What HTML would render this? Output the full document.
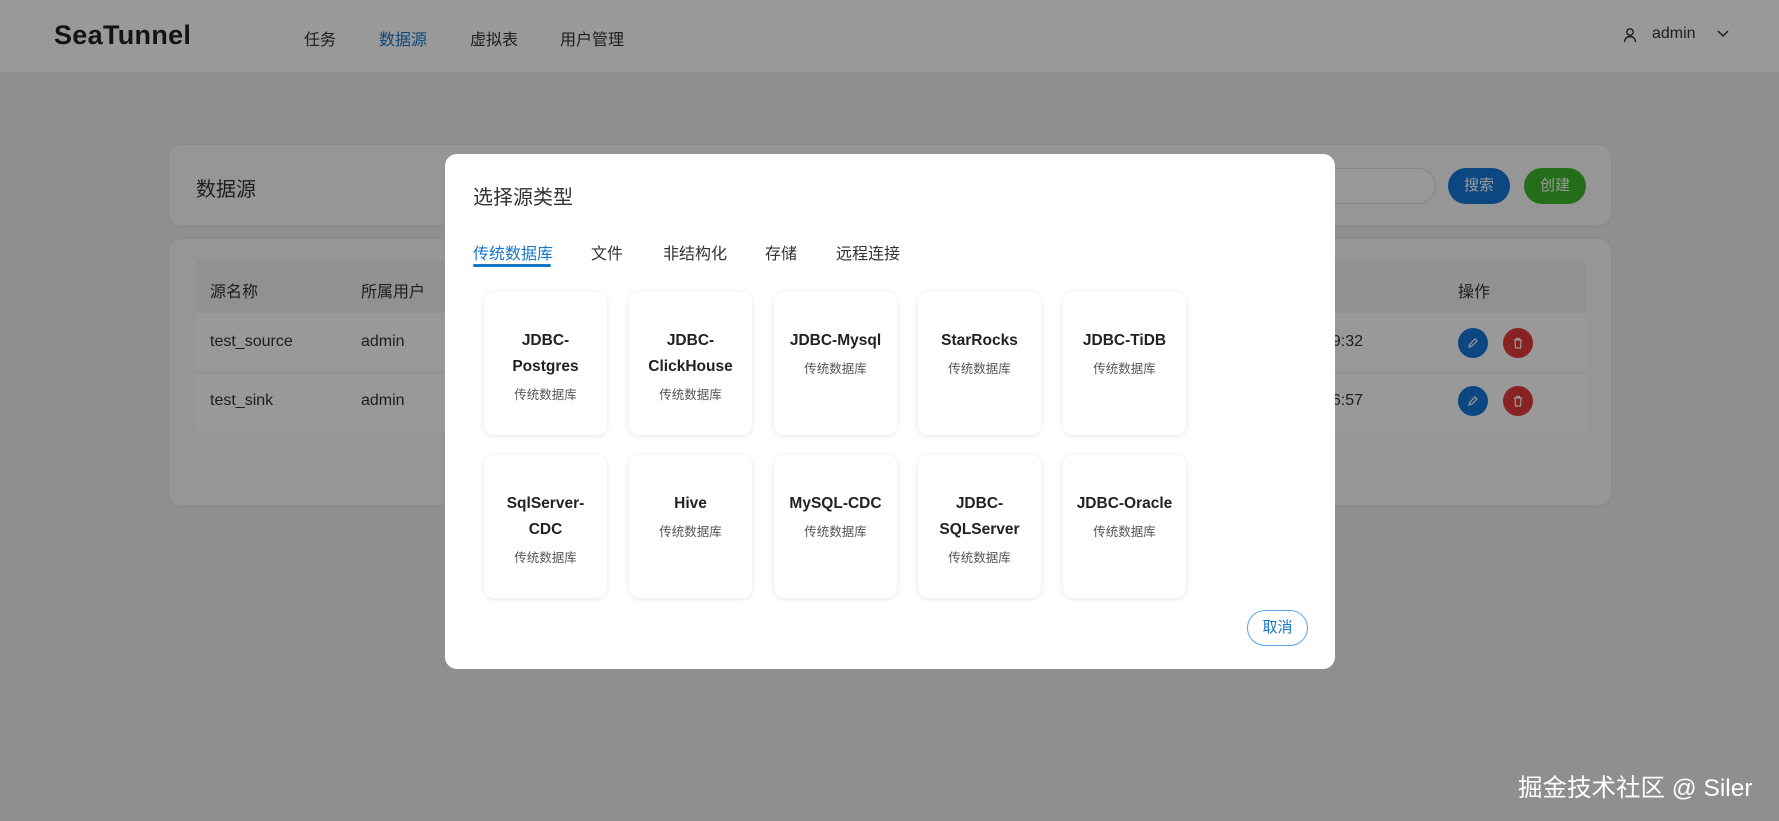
<!DOCTYPE html>
<html><head><meta charset="utf-8"><style>
*{box-sizing:border-box;margin:0;padding:0}
body{width:1779px;height:821px;overflow:hidden;background:#eeeeee;font-family:"Liberation Sans","Noto Sans CJK SC",sans-serif;position:relative;color:#333}
.abs{position:absolute}
.hdr{left:0;top:0;width:1779px;height:73px;background:#fff;border-bottom:1px solid #e6e6e6}
.logo{left:54px;top:20px;font-size:27px;font-weight:bold;color:#222;letter-spacing:0.3px}
.nav{top:26px;font-size:16px;color:#333}
.panel{background:#fafafa;border-radius:12px;box-shadow:0 1px 4px rgba(0,0,0,.06)}
.th{font-size:16px;color:#333}
.circ{width:30px;height:30px;border-radius:50%;display:flex;align-items:center;justify-content:center}
.mask{left:0;top:0;width:1779px;height:821px;background:rgba(0,0,0,.4)}
.modal{left:445px;top:154px;width:890px;height:515px;background:#fff;border-radius:12px}
.card{width:123px;height:143px;border-radius:10px;background:#fff;box-shadow:0 1px 6px rgba(0,0,0,.10);text-align:center;padding-top:36px}
.card b{display:block;font-size:15.5px;line-height:26px;color:#222}
.card span{display:block;font-size:12.5px;color:#555;margin-top:4px}
.tab{top:240px;font-size:16px;color:#333}
</style></head><body>
<div class="abs hdr"></div>
<div class="abs logo">SeaTunnel</div>
<div class="abs nav" style="left:304px">任务</div>
<div class="abs nav" style="left:379px;color:#1677c8">数据源</div>
<div class="abs nav" style="left:470px">虚拟表</div>
<div class="abs nav" style="left:560px">用户管理</div>
<svg class="abs" style="left:1622px;top:27px" width="16" height="16" viewBox="0 0 16 16" fill="none" stroke="#333" stroke-width="1.4"><circle cx="8" cy="5" r="3.2"/><path d="M2.5 15c0-3.3 2.4-5.5 5.5-5.5s5.5 2.2 5.5 5.5"/></svg>
<div class="abs nav" style="left:1652px;top:25px">admin</div>
<svg class="abs" style="left:1716px;top:29px" width="14" height="10" viewBox="0 0 14 10" fill="none" stroke="#333" stroke-width="1.5"><path d="M2 2l5 5 5-5"/></svg>

<div class="abs panel" style="left:169px;top:145px;width:1442px;height:80px"></div>
<div class="abs" style="left:196px;top:173px;font-size:20px;color:#333">数据源</div>
<div class="abs" style="left:1300px;top:168px;width:136px;height:36px;border:1px solid #ddd;border-radius:18px;background:#fff"></div>
<div class="abs" style="left:1448px;top:168px;width:62px;height:36px;border-radius:18px;background:#1677d8;color:#fff;font-size:15px;text-align:center;line-height:36px">搜索</div>
<div class="abs" style="left:1524px;top:168px;width:62px;height:36px;border-radius:18px;background:#3fb82a;color:#fff;font-size:15px;text-align:center;line-height:36px">创建</div>
<div class="abs panel" style="left:169px;top:239px;width:1442px;height:266px"></div>
<div class="abs" style="left:196px;top:261px;width:1390px;height:52px;background:#f2f2f2"></div>
<div class="abs" style="left:196px;top:313px;width:1390px;height:118px;background:#fff"></div>
<div class="abs" style="left:196px;top:372px;width:1390px;height:1px;background:#e8e8e8"></div>
<div class="abs th" style="left:210px;top:278px">源名称</div>
<div class="abs th" style="left:361px;top:278px">所属用户</div>
<div class="abs th" style="left:1458px;top:278px">操作</div>
<div class="abs th" style="left:210px;top:333px">test_source</div>
<div class="abs th" style="left:361px;top:333px">admin</div>
<div class="abs th" style="left:1323px;top:333px">19:32</div>
<div class="abs th" style="left:210px;top:392px">test_sink</div>
<div class="abs th" style="left:361px;top:392px">admin</div>
<div class="abs th" style="left:1323px;top:392px">16:57</div>
<div class="abs circ" style="left:1458px;top:328px;background:#1677d8"><svg width="12" height="12" viewBox="0 0 12 12" fill="none" stroke="#fff" stroke-width="1.2"><path d="M2 10l1-3 5-5 2 2-5 5z"/></svg></div>
<div class="abs circ" style="left:1503px;top:328px;background:#e53b3b"><svg width="12" height="12" viewBox="0 0 12 12" fill="none" stroke="#fff" stroke-width="1.2"><path d="M2 3h8M4.5 3V1.5h3V3M3 3l.5 8h5L9 3"/></svg></div>
<div class="abs circ" style="left:1458px;top:386px;background:#1677d8"><svg width="12" height="12" viewBox="0 0 12 12" fill="none" stroke="#fff" stroke-width="1.2"><path d="M2 10l1-3 5-5 2 2-5 5z"/></svg></div>
<div class="abs circ" style="left:1503px;top:386px;background:#e53b3b"><svg width="12" height="12" viewBox="0 0 12 12" fill="none" stroke="#fff" stroke-width="1.2"><path d="M2 3h8M4.5 3V1.5h3V3M3 3l.5 8h5L9 3"/></svg></div>

<div class="abs mask"></div>

<div class="abs modal"></div>
<div class="abs" style="left:473px;top:181px;font-size:20px;color:#333">选择源类型</div>
<div class="abs tab" style="left:473px;color:#1677c8">传统数据库</div>
<div class="abs" style="left:473px;top:264px;width:78px;height:3px;background:#1677c8;border-radius:2px"></div>
<div class="abs tab" style="left:591px">文件</div>
<div class="abs tab" style="left:663px">非结构化</div>
<div class="abs tab" style="left:765px">存储</div>
<div class="abs tab" style="left:836px">远程连接</div>

<div class="abs card" style="left:484px;top:292px"><b>JDBC-<br>Postgres</b><span>传统数据库</span></div>
<div class="abs card" style="left:629px;top:292px"><b>JDBC-<br>ClickHouse</b><span>传统数据库</span></div>
<div class="abs card" style="left:774px;top:292px"><b>JDBC-Mysql</b><span>传统数据库</span></div>
<div class="abs card" style="left:918px;top:292px"><b>StarRocks</b><span>传统数据库</span></div>
<div class="abs card" style="left:1063px;top:292px"><b>JDBC-TiDB</b><span>传统数据库</span></div>
<div class="abs card" style="left:484px;top:455px"><b>SqlServer-<br>CDC</b><span>传统数据库</span></div>
<div class="abs card" style="left:629px;top:455px"><b>Hive</b><span>传统数据库</span></div>
<div class="abs card" style="left:774px;top:455px"><b>MySQL-CDC</b><span>传统数据库</span></div>
<div class="abs card" style="left:918px;top:455px"><b>JDBC-<br>SQLServer</b><span>传统数据库</span></div>
<div class="abs card" style="left:1063px;top:455px"><b>JDBC-Oracle</b><span>传统数据库</span></div>

<div class="abs" style="left:1247px;top:610px;width:61px;height:36px;border:1.5px solid #5aa7e6;border-radius:18px;color:#1677c8;font-size:15px;text-align:center;line-height:33px">取消</div>

<div class="abs" style="left:1518px;top:769px;font-size:24.5px;color:#fff">掘金技术社区 @ Siler</div>
</body></html>
